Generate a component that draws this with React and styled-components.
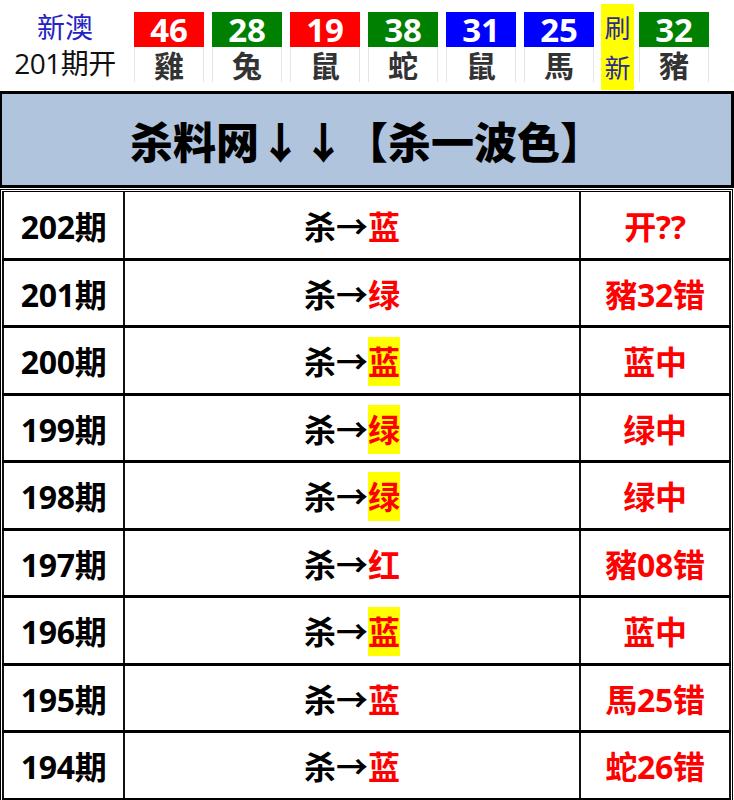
import React from "react";
import styled, { createGlobalStyle } from "styled-components";

const GlobalStyle = createGlobalStyle`
  body {
    margin: 0;
    background: #fff;
    font-family: "Open Sans", "Noto Sans CJK SC", sans-serif;
  }
`;

const balls = [
  { num: "46", animal: "雞", color: "#ff0000" },
  { num: "28", animal: "兔", color: "#008000" },
  { num: "19", animal: "鼠", color: "#ff0000" },
  { num: "38", animal: "蛇", color: "#008000" },
  { num: "31", animal: "鼠", color: "#0000ff" },
  { num: "25", animal: "馬", color: "#0000ff" },
];

const lastBall = { num: "32", animal: "豬", color: "#008000" };

const rows = [
  { issue: "202期", kill: "蓝", mark: false, result: "开??" },
  { issue: "201期", kill: "绿", mark: false, result: "豬32错" },
  { issue: "200期", kill: "蓝", mark: true, result: "蓝中" },
  { issue: "199期", kill: "绿", mark: true, result: "绿中" },
  { issue: "198期", kill: "绿", mark: true, result: "绿中" },
  { issue: "197期", kill: "红", mark: false, result: "豬08错" },
  { issue: "196期", kill: "蓝", mark: true, result: "蓝中" },
  { issue: "195期", kill: "蓝", mark: false, result: "馬25错" },
  { issue: "194期", kill: "蓝", mark: false, result: "蛇26错" },
];

const Ball = ({ num, animal, color }) => (
  <BallCell>
    <NumBand color={color}>{num}</NumBand>
    <Animal>{animal}</Animal>
  </BallCell>
);

export default function App() {
  return (
    <Page>
      <GlobalStyle />
      <TopBar>
        <DrawInfo>
          <span className="site">新澳</span>
          <span className="issue">201期开</span>
        </DrawInfo>
        {balls.map((b, i) => (
          <Ball key={i} {...b} />
        ))}
        <Refresh>
          <span>刷</span>
          <span>新</span>
        </Refresh>
        <Ball {...lastBall} />
      </TopBar>

      <Title>杀料网↓↓【杀一波色】</Title>

      <Frame>
        <Table>
          <colgroup>
            <col style={{ width: 121 }} />
            <col />
            <col style={{ width: 150 }} />
          </colgroup>
          <tbody>
            {rows.map((r) => (
              <tr key={r.issue}>
                <Issue>{r.issue}</Issue>
                <Kill>
                  杀→<Color mark={r.mark}>{r.kill}</Color>
                </Kill>
                <Result>{r.result}</Result>
              </tr>
            ))}
          </tbody>
        </Table>
      </Frame>
    </Page>
  );
}

const Page = styled.div`
  width: 734px;
  overflow: hidden;
`;

const TopBar = styled.div`
  display: flex;
  align-items: flex-start;
  height: 91px;
  box-sizing: border-box;
`;

const DrawInfo = styled.div`
  width: 130px;
  margin-right: 4px;
  display: flex;
  flex-direction: column;
  align-items: center;
  padding-top: 9px;

  .site {
    color: #2323c4;
    font-size: 28px;
    line-height: 36px;
  }

  .issue {
    color: #111;
    font-size: 28px;
    line-height: 36px;
    letter-spacing: -0.5px;
  }
`;

const BallCell = styled.div`
  width: 70px;
  margin-top: 12px;
  margin-right: 8px;
  display: flex;
  flex-direction: column;
`;

const NumBand = styled.div`
  height: 35px;
  background: ${({ color }) => color};
  color: #fff;
  font-weight: 700;
  font-size: 33px;
  line-height: 35px;
  text-align: center;
`;

const Animal = styled.div`
  height: 35px;
  border-left: 1px solid #e4e4e4;
  border-right: 1px solid #e4e4e4;
  color: #333;
  font-family: "Noto Sans CJK TC", "Noto Sans CJK SC", sans-serif;
  font-weight: 700;
  font-size: 30px;
  line-height: 35px;
  text-align: center;
`;

const Refresh = styled.div`
  width: 33px;
  height: 86px;
  margin-top: 4px;
  margin-left: -1px;
  margin-right: 5px;
  background: #ffff00;
  color: #2b2b96;
  display: flex;
  flex-direction: column;
  align-items: center;
  justify-content: center;
  font-family: "Noto Sans CJK SC", sans-serif;
  font-size: 26px;
  line-height: 40px;
`;

const Title = styled.div`
  height: 91px;
  border: 3px solid #000;
  border-left-width: 2px;
  border-right-width: 3px;
  background: #b0c4de;
  display: flex;
  align-items: center;
  justify-content: center;
  font-family: "Noto Sans CJK SC", sans-serif;
  font-weight: 900;
  font-size: 43px;
  color: #000;
`;

const Frame = styled.div`
  margin-top: 1px;
  border: 1px solid #000;
  padding: 1px;
  margin-right: 1px;
`;

const Table = styled.table`
  width: 100%;
  border-collapse: collapse;
  table-layout: fixed;

  tr {
    height: 67.5px;
  }

  td {
    border-top: 3px solid #000;
    border-bottom: 3px solid #000;
    border-left: 2px solid #111;
    border-right: 2px solid #111;
    padding: 0;
    text-align: center;
    font-weight: 700;
    font-size: 32px;
  }

  tr:first-child td {
    border-top-width: 1px;
  }
`;

const Issue = styled.td`
  color: #000;
  letter-spacing: -0.3px;
`;

const Kill = styled.td`
  color: #000;
`;

const Color = styled.span`
  color: #ff0000;
  background: ${({ mark }) => (mark ? "#ffff00" : "transparent")};
  padding: 3px 0;
`;

const Result = styled.td`
  color: #ff0000;
  letter-spacing: -0.3px;
`;
